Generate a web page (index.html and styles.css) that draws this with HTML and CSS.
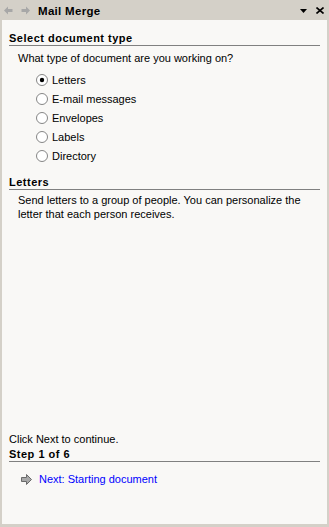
FILE: index.html
```html
<!DOCTYPE html>
<html>
<head>
<meta charset="utf-8">
<link rel="stylesheet" href="styles.css">
</head>
<body>
<div class="pane">
  <div class="titlebar">
    <svg class="nav" width="9" height="9" viewBox="0 0 9 9"><path d="M0 4.5 L4 0.5 L4 3 L8.5 3 L8.5 6 L4 6 L4 8.5 Z" fill="#a7a7a7"/></svg>
    <svg class="nav nav2" width="9" height="9" viewBox="0 0 9 9"><path d="M9 4.5 L5 0.5 L5 3 L0.5 3 L0.5 6 L5 6 L5 8.5 Z" fill="#a7a7a7"/></svg>
    <span class="title">Mail Merge</span>
    <span class="spacer"></span>
    <svg class="drop" width="7" height="4" viewBox="0 0 7 4"><path d="M0 0 H7 L3.5 4 Z" fill="#000"/></svg>
    <svg class="close" width="8" height="7" viewBox="0 0 8 7"><path d="M0.5 0.5 L7.5 6.5 M7.5 0.5 L0.5 6.5" stroke="#000" stroke-width="1.6"/></svg>
  </div>
  <div class="content">
    <div class="heading h-first">Select document type</div>
    <div class="text indent q">What type of document are you working on?</div>
    <div class="radios">
      <div class="radio"><svg width="12" height="12" viewBox="0 0 12 12"><circle cx="6" cy="6" r="5.5" fill="#fff" stroke="#858585"/><circle cx="6" cy="6" r="2.2" fill="#000"/></svg><span>Letters</span></div>
      <div class="radio"><svg width="12" height="12" viewBox="0 0 12 12"><circle cx="6" cy="6" r="5.5" fill="#fff" stroke="#858585"/></svg><span>E-mail messages</span></div>
      <div class="radio"><svg width="12" height="12" viewBox="0 0 12 12"><circle cx="6" cy="6" r="5.5" fill="#fff" stroke="#858585"/></svg><span>Envelopes</span></div>
      <div class="radio"><svg width="12" height="12" viewBox="0 0 12 12"><circle cx="6" cy="6" r="5.5" fill="#fff" stroke="#858585"/></svg><span>Labels</span></div>
      <div class="radio"><svg width="12" height="12" viewBox="0 0 12 12"><circle cx="6" cy="6" r="5.5" fill="#fff" stroke="#858585"/></svg><span>Directory</span></div>
    </div>
    <div class="heading h-second">Letters</div>
    <div class="text indent desc">Send letters to a group of people. You can personalize the letter that each person receives.</div>
    <div class="bottom">
      <div class="text">Click Next to continue.</div>
      <div class="heading">Step 1 of 6</div>
      <div class="next">
        <svg width="11" height="11" viewBox="0 0 11 11"><path d="M0.5 3.5 H5.5 V0.5 L10.5 5.5 L5.5 10.5 V7.5 H0.5 Z" fill="#a8a8a8" stroke="#6a6a6a"/></svg>
        <span class="link">Next: Starting document</span>
      </div>
    </div>
  </div>
</div>
</body>
</html>
```

FILE: styles.css
```css
html, body {
  margin: 0;
  padding: 0;
  background: #d4d0c8;
}
body {
  font-family: "Liberation Sans", Arial, sans-serif;
  font-size: 11px;
  color: #000;
}
.pane {
  width: 329px;
  height: 527px;
  display: flex;
  flex-direction: column;
}
.titlebar {
  height: 20px;
  display: flex;
  align-items: center;
  padding: 0 5px 0 4px;
  box-sizing: border-box;
}
.nav { display: block; }
.nav2 { margin-left: 8px; }
.title {
  font-weight: bold;
  font-size: 11.5px;
  letter-spacing: 0.3px;
  margin-left: 8px;
  padding-top: 1px;
}
.spacer { flex: 1; }
.drop { display: block; margin-right: 9px; margin-top: 1px; }
.close { display: block; margin-top: 1px; }
.content {
  flex: 1;
  margin: 0 2px 3px 2px;
  background: #f9f8f6;
  padding: 12px 7px 38px 7px;
  display: flex;
  flex-direction: column;
}
.heading {
  font-weight: bold;
  letter-spacing: 0.5px;
  line-height: 13px;
  border-bottom: 1px solid #808080;
}
.text {
  line-height: 14px;
}
.indent { padding-left: 9px; }
.q { margin-top: 5px; }
.radios {
  margin-top: 5px;
  padding-left: 27px;
  display: flex;
  flex-direction: column;
}
.radio {
  height: 19px;
  display: flex;
  align-items: center;
  gap: 4px;
}
.radio svg { display: block; }
.h-second { margin-top: 11px; }
.desc { margin-top: 3px; padding-right: 10px; }
.bottom {
  margin-top: auto;
  display: flex;
  flex-direction: column;
}
.bottom .heading { margin-top: 2px; }
.next {
  margin-top: 10px;
  padding-left: 12px;
  display: flex;
  align-items: center;
  gap: 7px;
  line-height: 14px;
}
.next svg { display: block; }
.link { color: #0000ff; }
```
